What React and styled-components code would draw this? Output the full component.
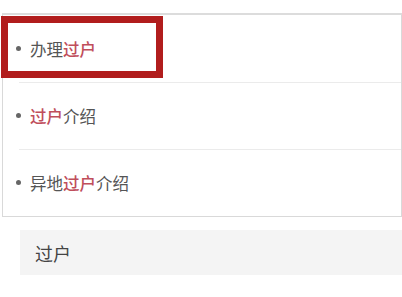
import styled, { createGlobalStyle } from "styled-components"

const Global = createGlobalStyle`
  html, body { margin: 0; padding: 0; background: #fff; }
  body { font-family: "Noto Sans CJK SC", "Noto Sans", sans-serif; }
`

const Page = styled.div`
  width: 402px;
  height: 297px;
  overflow: hidden;
  padding-top: 13px;
  box-sizing: border-box;
`

const Lista = styled.ul`
  position: relative;
  list-style: none;
  margin: 0 0 0 2px;
  padding: 0;
  border: 1px solid #d9d9d9;
  border-top: 2px solid #dcdcdc;
`

const Fila = styled.li`
  height: 67px;
  display: flex;
  align-items: center;
  padding-left: 13px;
  font-size: 16.5px;
  color: #555;
  position: relative;

  & + &::before {
    content: "";
    position: absolute;
    top: 0;
    left: 16px;
    right: 0;
    height: 1px;
    background: #ebebeb;
  }
`

const Punto = styled.span`
  width: 5px;
  height: 5px;
  border-radius: 50%;
  background: #666;
  margin-right: 9px;
`

const Marca = styled.span`
  color: #c04e5b;
  font-weight: 500;
`

const Recuadro = styled.div`
  position: absolute;
  left: -2px;
  top: 1px;
  width: 162px;
  height: 62px;
  border: 7px solid #b11d1d;
  box-sizing: border-box;
`

const Caja = styled.div`
  margin: 13px 0 0 20px;
  height: 45px;
  background: #f4f4f4;
  display: flex;
  align-items: center;
  padding-left: 15px;
  font-size: 18px;
  color: #444;
`

const Items = [
  ["办理", "过户", ""],
  ["", "过户", "介绍"],
  ["异地", "过户", "介绍"],
]

const App = () => {
  return (
    <>
      <Global />
      <Page>
        <Lista>
          {Items.map((it, i) => (
            <Fila key={i}>
              <Punto />
              {it[0]}
              <Marca>{it[1]}</Marca>
              {it[2]}
            </Fila>
          ))}
          <Recuadro />
        </Lista>
        <Caja>过户</Caja>
      </Page>
    </>
  )
}

export default App
